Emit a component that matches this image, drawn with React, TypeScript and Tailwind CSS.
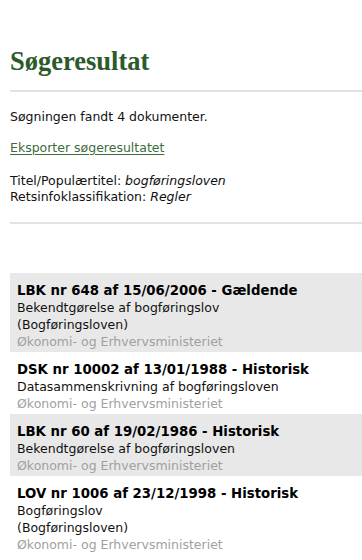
import React from "react";

const items = [
  {
    title: "LBK nr 648 af 15/06/2006 - Gældende",
    lines: ["Bekendtgørelse af bogføringslov", "(Bogføringsloven)"],
    ministry: "Økonomi- og Erhvervsministeriet",
    gray: true,
  },
  {
    title: "DSK nr 10002 af 13/01/1988 - Historisk",
    lines: ["Datasammenskrivning af bogføringsloven"],
    ministry: "Økonomi- og Erhvervsministeriet",
    gray: false,
  },
  {
    title: "LBK nr 60 af 19/02/1986 - Historisk",
    lines: ["Bekendtgørelse af bogføringsloven"],
    ministry: "Økonomi- og Erhvervsministeriet",
    gray: true,
  },
  {
    title: "LOV nr 1006 af 23/12/1998 - Historisk",
    lines: ["Bogføringslov", "(Bogføringsloven)"],
    ministry: "Økonomi- og Erhvervsministeriet",
    gray: false,
  },
];

export default function App() {
  return (
    <div className="w-[362px] h-[560px] overflow-hidden bg-white pl-[10px] text-[12.5px] leading-[16px] text-[#111] [font-family:'DejaVu_Sans',Verdana,sans-serif]">
      <h1 className="pt-[46px] text-[26.5px] leading-[30px] font-bold text-[#2c5a2a] [font-family:'Liberation_Serif','Times_New_Roman',serif]">
        Søgeresultat
      </h1>
      <div className="mt-[14px] h-[2px] bg-[#e3e3e3]" />
      <p className="mt-[17px]">Søgningen fandt 4 dokumenter.</p>
      <a href="#" className="mt-[15px] block w-max text-[#3d6b3a] underline underline-offset-[2px]">
        Eksporter søgeresultatet
      </a>
      <div className="mt-[17px]">
        <div>
          Titel/Populærtitel: <i>bogføringsloven</i>
        </div>
        <div>
          Retsinfoklassifikation: <i>Regler</i>
        </div>
      </div>
      <div className="mt-[17px] h-[2px] bg-[#e3e3e3]" />
      <div className="mt-[49px] flex flex-col">
        {items.map((it, i) => (
          <div
            key={i}
            className={`pl-[7px] pt-[9px] pb-[2px] leading-[17px] ${it.gray ? "bg-[#e8e8e8]" : "bg-white"}`}
          >
            <div className="font-bold text-[13.3px] text-black">{it.title}</div>
            {it.lines.map((l, j) => (
              <div key={j}>{l}</div>
            ))}
            <div className="text-[#a0a0a0]">{it.ministry}</div>
          </div>
        ))}
      </div>
    </div>
  );
}
